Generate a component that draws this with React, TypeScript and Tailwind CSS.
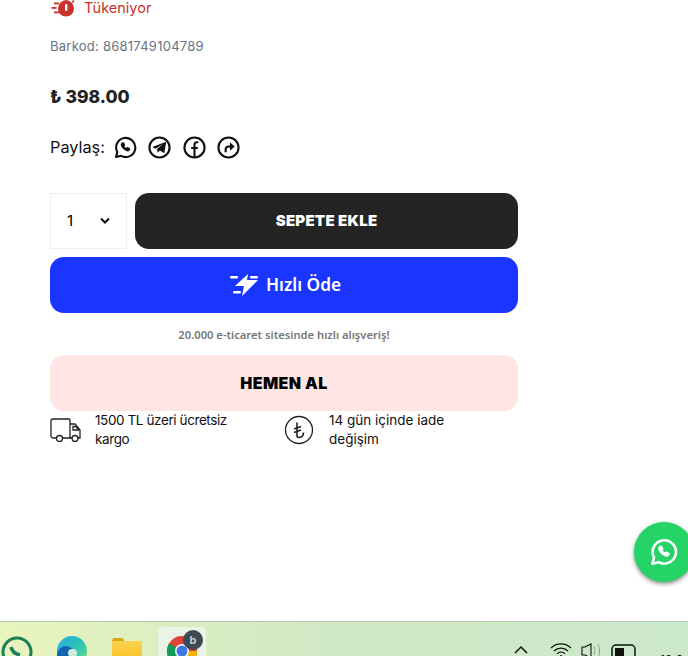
const TimerIcon = () => (
  <svg width="26" height="18" viewBox="0 0 26 18" className="shrink-0">
    <circle cx="16" cy="9.500" r="8" fill="#c8322b" />
    <rect x="13.500" y="0" width="5" height="1.600" fill="#c8322b" />
    <rect x="15" y="5" width="2.400" height="7" rx="1" fill="#fff" />
    <path d="M22 3.500l2-2" stroke="#c8322b" strokeWidth="1.600" />
    <rect x="4" y="3.500" width="5" height="1.800" fill="#c8322b" />
    <rect x="1.500" y="8" width="5" height="1.800" fill="#c8322b" />
    <rect x="4" y="12.500" width="5" height="1.800" fill="#c8322b" />
  </svg>
)

const WhatsappIcon = ({ size = 23, color = "#111" }: { size?: number; color?: string }) => (
  <svg width={size} height={size} viewBox="0 0 24 24" fill="none" stroke={color} strokeWidth="2.200" strokeLinejoin="round" strokeLinecap="round">
    <path d="M2 22l1.500-5.200A10 10 0 1 1 7.400 20.700L2 22z" />
    <path d="M8.600 7.400c-.9.700-1 2-.3 3.400 1 2 2.700 3.500 4.800 4.300 1.300.5 2.500.2 3-.8l.2-.9-2.300-1.200-1 1c-1.200-.4-2.400-1.500-3-2.800l.9-1-1-2.200z" strokeWidth="1.400" fill={color} />
  </svg>
)

const ShareIcons = () => (
  <div className="flex items-center gap-[11.300px]">
    <WhatsappIcon />
    <svg width="23" height="23" viewBox="0 0 24 24" fill="none">
      <circle cx="12" cy="12" r="10.500" stroke="#111" strokeWidth="2.200" />
      <path d="M4.500 11.500L19 6l-2 12-4.500-3-2.500 2.500-.5-4L16 8l-8 5.200z" fill="#111" />
    </svg>
    <svg width="23" height="23" viewBox="0 0 24 24" fill="none">
      <circle cx="12" cy="12" r="10.500" stroke="#111" strokeWidth="2.200" />
      <path d="M16 6.500h-1.500c-1.500 0-2.500 1-2.500 2.500v13M8.500 12.500H15.500" stroke="#111" strokeWidth="2.200" />
    </svg>
    <svg width="23" height="23" viewBox="0 0 24 24" fill="none">
      <circle cx="12" cy="12" r="10.500" stroke="#111" strokeWidth="2.200" />
      <path d="M9 17v-2.500c0-2 1.200-3.500 3.500-3.500H16" stroke="#111" strokeWidth="2.200" />
      <path d="M13.500 6.500L18.500 11l-5 4.500z" fill="#111" />
    </svg>
  </div>
)

const BoltIcon = () => (
  <svg width="30" height="26" viewBox="0 0 30 26" fill="#fff">
    <path d="M19 2L6 14h9l-2 10 16-16H18z" />
    <rect x="1" y="4" width="8" height="2.400" rx="1.200" />
    <rect x="21" y="4" width="8" height="2.400" rx="1.200" />
    <rect x="4" y="19" width="8" height="2.400" rx="1.200" />
  </svg>
)

const TruckIcon = () => (
  <svg width="31" height="24" viewBox="0 0 31 24" fill="none" stroke="#222" strokeWidth="1.300" className="shrink-0">
    <path d="M6 20H3a2 2 0 0 1-2-2V3a2 2 0 0 1 2-2h16a1 1 0 0 1 1 1v18h-7" />
    <path d="M20 6h5l5 6v8h-2M20 20h2" />
    <path d="M23 8.500h3l2.500 3.500H23z" />
    <circle cx="9.500" cy="20.500" r="3" />
    <circle cx="25" cy="20.500" r="3" />
  </svg>
)

const LiraIcon = () => (
  <svg width="30" height="30" viewBox="0 0 30 30" fill="none" stroke="#222" strokeWidth="1.300" className="shrink-0">
    <circle cx="15" cy="15" r="13.500" />
    <path d="M13 7.500V21c0 1 .5 1.500 1.500 1.500 3 0 5-2 5-5" strokeWidth="1.600" />
    <path d="M10 14l7-2.500M10 17.500l7-2.500" strokeWidth="1.600" />
  </svg>
)

const Taskbar = () => (
  <div className="relative h-[35px] shrink-0 overflow-hidden border-t border-[#b5c8b0] bg-gradient-to-r from-[#e9f4bd] via-[#cfe8c6] to-[#cce8cb]">
    <svg width="40" height="36" viewBox="0 0 40 36" className="absolute left-0 top-[3px]" fill="none">
      <circle cx="17" cy="27" r="14" stroke="#1c8158" strokeWidth="3" />
      <path d="M11 22c1 4 4 7 9 8" stroke="#1c8158" strokeWidth="3.500" />
    </svg>
    <div className="absolute left-[57px] top-[14px] h-[30px] w-[30px] rounded-full bg-gradient-to-br from-[#2fa9e6] via-[#2bc4b4] to-[#6fdc80]" />
    <div className="absolute left-[57px] top-[24px] h-[20px] w-[18px] rounded-full bg-[#1464b4]" />
    <div className="absolute left-[68px] top-[27px] h-[8px] w-[9px] rounded-full bg-[#cfeee0]" />
    <div className="absolute left-[112px] top-[16px] h-[8px] w-[12px] rounded-t-[3px] bg-[#dba413]" />
    <div className="absolute left-[112px] top-[19px] h-[20px] w-[30px] bg-gradient-to-b from-[#fcd34d] to-[#fbbf24]" />
    <div className="absolute left-[158px] top-[5px] h-[40px] w-[48px] rounded-[5px] bg-[#e9f3e6]" />
    <svg width="30" height="30" viewBox="0 0 30 30" className="absolute left-[167px] top-[14px]">
      <circle cx="15" cy="15" r="15" fill="#db4437" />
      <path d="M15 15L2 22.500A15 15 0 0 0 15 30z" fill="#0f9d58" />
      <path d="M15 15V30A15 15 0 0 0 30 15z" fill="#f4b400" />
      <path d="M15 15L2 22.500A15 15 0 0 1 2 7.500z" fill="#0f9d58" />
      <circle cx="15" cy="15" r="7" fill="#fff" />
      <circle cx="15" cy="15" r="5.500" fill="#3b78e7" />
    </svg>
    <div className="absolute left-[183px] top-[8px] flex h-[20px] w-[20px] items-center justify-center rounded-full bg-[#3d4a55] text-[11px] font-bold text-[#c5ccd3]">b</div>
    <svg width="130" height="24" viewBox="0 0 130 24" fill="none" stroke="#111" className="absolute left-[514px] top-[18px]">
      <path d="M1 13l6-6 6 6" strokeWidth="1.500" />
      <path d="M37 8a14 14 0 0 1 20 0M40 11a10 10 0 0 1 14 0M43 14a5 5 0 0 1 8 0" strokeWidth="1.200" />
      <circle cx="47" cy="16" r="1" fill="#111" stroke="none" />
      <path d="M68 7h3l6-3v14l-6-3h-3z" strokeWidth="1.100" />
      <path d="M80 6c1 3 1 6 0 9M84 4c2 4 2 10 0 14" stroke="#999" strokeWidth="1" />
      <rect x="98" y="5" width="23" height="14" rx="4" strokeWidth="1.500" />
      <rect x="101" y="8" width="9" height="8" fill="#111" stroke="none" />
    </svg>
    <span className="absolute left-[660px] top-[31px] text-[12px] leading-[14px] text-[#111]">12:0</span>
  </div>
)

export default function App() {
  return (
    <div className="relative flex h-[656px] w-[688px] flex-col overflow-hidden bg-white font-['Inter','Liberation_Sans',sans-serif]">
      <div className="flex h-[621px] w-[518px] shrink-0 flex-col pl-[50px]">
        <div className="flex h-[15px] items-center gap-[8px] text-[14.500px] text-[#c8322b]">
          <TimerIcon />
          <span>Tükeniyor</span>
        </div>
        <p className="mt-[23px] h-[17px] text-[13px] leading-[17px] tracking-[0.25px] text-[#6b7280]">Barkod: 8681749104789</p>
        <p className="mt-[31px] h-[22px] text-[17.500px] font-extrabold leading-[22px] text-[#222]">₺ 398.00</p>
        <div className="mt-[27px] flex h-[24px] items-center gap-[9px] text-[16.300px] text-[#111]">
          <span>Paylaş:</span>
          <ShareIcons />
        </div>
        <div className="mt-[34px] flex h-[56px] gap-[8px]">
          <div className="flex w-[77px] items-center justify-between border border-[#eeeeee] pl-[16px] pr-[15px] text-[15px] text-black">
            <span>1</span>
            <svg width="12" height="8" viewBox="0 0 12 8" fill="none" stroke="#111" strokeWidth="2">
              <path d="M2 1.500l4 4 4-4" />
            </svg>
          </div>
          <button className="flex-1 rounded-[14px] bg-[#242424] text-[15px] font-black tracking-[0.25px] text-white">SEPETE EKLE</button>
        </div>
        <button className="mt-[8px] flex h-[56px] items-center justify-center gap-[7px] rounded-[14px] bg-[#1a35ff] pl-[2px] font-['Noto_Sans',sans-serif] text-[17.300px] font-semibold text-white">
          <BoltIcon />
          <span>Hızlı Öde</span>
        </button>
        <p className="mt-[14px] h-[16px] text-center font-['Noto_Sans',sans-serif] text-[11.200px] font-semibold leading-[16px] text-[#777777]">20.000 e-ticaret sitesinde hızlı alışveriş!</p>
        <button className="mt-[12px] h-[56px] rounded-[14px] bg-[#fde6e4] text-[16px] font-black tracking-[0.4px] text-black">HEMEN AL</button>
        <div className="flex text-[13.500px] leading-[19px] text-[#111]">
          <div className="flex w-[234px] items-center gap-[14px]">
            <TruckIcon />
            <span className="w-[150px] tracking-[-0.4px]">1500 TL üzeri ücretsiz kargo</span>
          </div>
          <div className="flex items-center gap-[15px]">
            <LiraIcon />
            <span className="w-[130px]">14 gün içinde iade değişim</span>
          </div>
        </div>
      </div>
      <div className="absolute left-[634px] top-[522px] flex h-[60px] w-[60px] items-center justify-center rounded-full bg-[#25d366] shadow-[0_2px_4px_rgba(0,0,0,0.45)]">
        <WhatsappIcon size={28} color="#fff" />
      </div>
      <Taskbar />
    </div>
  )
}
